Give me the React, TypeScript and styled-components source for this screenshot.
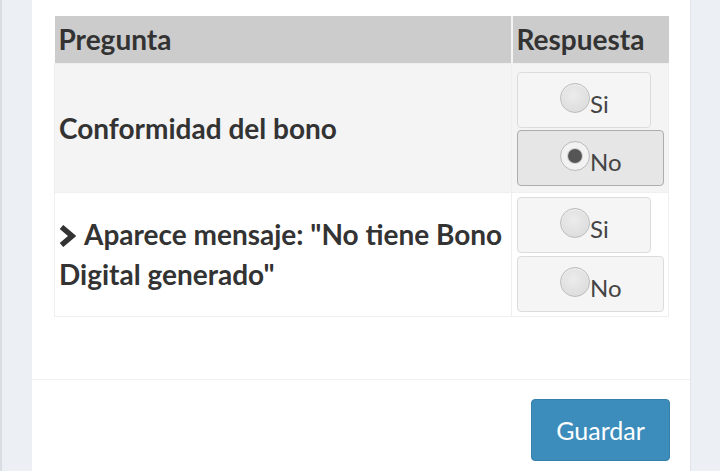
import React from 'react';
import styled, { createGlobalStyle } from 'styled-components';

const GlobalStyle = createGlobalStyle`
  html, body {
    margin: 0;
    padding: 0;
    background: #ecf0f5;
  }
  body {
    font-family: Lato, 'Open Sans', sans-serif;
    color: #333;
  }
`;

const Wrapper = styled.div`
  display: flex;
  min-height: 471px;
  border-left: 2px solid #d9dde4;
  padding: 0 29px 0 30px;
`;

const Box = styled.div`
  flex: 1;
  background: #fff;
  border-right: 1px solid #dfe3ea;
  display: flex;
  flex-direction: column;
`;

const BoxBody = styled.div`
  padding: 16px 21px 62px 22px;
`;

const BoxFooter = styled.div`
  border-top: 1px solid #f1f1f1;
  padding: 19px 20px 9px;
  display: flex;
  justify-content: flex-end;
`;

const Table = styled.table`
  width: 100%;
  table-layout: fixed;
  border-collapse: collapse;
`;

const Th = styled.th<{ $w?: number }>`
  background: #cccccc;
  text-align: left;
  font-size: 28px;
  font-weight: 700;
  color: #333;
  height: 47px;
  padding: 0 4px;
  border-left: 2px solid #f4f4f4;
  box-sizing: border-box;
  width: ${(p) => (p.$w ? `${p.$w}px` : 'auto')};
  &:first-child {
    border-left: none;
  }
`;

const Tr = styled.tr<{ $striped?: boolean }>`
  background: ${(p) => (p.$striped ? '#f4f4f4' : '#fff')};
  border: 1px solid #efefef;
`;

const QuestionCell = styled.td`
  font-size: 28px;
  font-weight: 700;
  line-height: 40px;
  color: #333;
  padding: 0 4px;
  vertical-align: middle;
  border-right: 1px solid #efefef;
`;

const AnswerCell = styled.td<{ $top: number; $bottom: number }>`
  padding: ${(p) => p.$top}px 5px ${(p) => p.$bottom}px;
  vertical-align: top;
`;

const Options = styled.div<{ $gap: number }>`
  display: flex;
  flex-direction: column;
  align-items: flex-start;
  gap: ${(p) => p.$gap}px;
`;

const OptionLabel = styled.label<{ $active?: boolean }>`
  display: flex;
  align-items: baseline;
  padding: 10px 41px 8px 42px;
  border-radius: 4px;
  border: 1px solid ${(p) => (p.$active ? '#adadad' : '#dcdcdc')};
  background: ${(p) => (p.$active ? '#e6e6e6' : '#f5f5f5')};
  font-size: 24px;
  line-height: 30px;
  color: #444;
  cursor: pointer;
`;

const RadioCircle = styled.span<{ $checked?: boolean }>`
  display: inline-block;
  width: 30px;
  height: 30px;
  box-sizing: border-box;
  border-radius: 50%;
  border: 1px solid #bdbdbd;
  background: radial-gradient(circle at 45% 40%, #ececec 0%, #dedede 70%, #d2d2d2 100%);
  box-shadow: ${(p) =>
    p.$checked
      ? 'inset 0 0 0 6px #f2f2f2, inset 0 0 0 7px #cfcfcf'
      : 'inset 0 1px 2px rgba(255,255,255,0.6)'};
  position: relative;
  &::after {
    content: '';
    display: ${(p) => (p.$checked ? 'block' : 'none')};
    position: absolute;
    left: 50%;
    top: 50%;
    width: 14px;
    height: 14px;
    margin: -7px 0 0 -7px;
    border-radius: 50%;
    background: #555;
  }
`;

const Chevron = styled.svg`
  width: 17px;
  height: 22px;
  margin-right: 8px;
  vertical-align: -2px;
`;

const SaveButton = styled.button`
  font-family: Lato, 'Open Sans', sans-serif;
  font-size: 25px;
  color: #fff;
  background: #3c8dbc;
  border: 1px solid #367fa9;
  border-radius: 4px;
  width: 139px;
  height: 62px;
  cursor: pointer;
`;

type Question = {
  text: React.ReactNode;
  answer: 'Si' | 'No' | null;
  top: number;
  bottom: number;
  gap: number;
};

const questions: Question[] = [
  { text: 'Conformidad del bono', answer: 'No', top: 8, bottom: 6, gap: 2 },
  {
    text: (
      <>
        <Chevron viewBox="0 0 17 22">
          <polyline
            points="2.5,2 13,11 2.5,20"
            fill="none"
            stroke="#333"
            strokeWidth="5.4"
            strokeLinejoin="miter"
          />
        </Chevron>
        Aparece mensaje: "No tiene Bono
        <br />
        Digital generado"
      </>
    ),
    answer: null,
    top: 4,
    bottom: 4,
    gap: 3,
  },
];

const App = () => {
  return (
    <Wrapper>
      <GlobalStyle />
      <Box>
        <BoxBody>
          <Table>
            <thead>
              <tr>
                <Th>Pregunta</Th>
                <Th $w={157}>Respuesta</Th>
              </tr>
            </thead>
            <tbody>
              {questions.map((q, i) => (
                <Tr key={i} $striped={i % 2 === 0}>
                  <QuestionCell>{q.text}</QuestionCell>
                  <AnswerCell $top={q.top} $bottom={q.bottom}>
                    <Options $gap={q.gap}>
                      {(['Si', 'No'] as const).map((opt) => (
                        <OptionLabel key={opt} $active={q.answer === opt}>
                          <RadioCircle $checked={q.answer === opt} />
                          {opt}
                        </OptionLabel>
                      ))}
                    </Options>
                  </AnswerCell>
                </Tr>
              ))}
            </tbody>
          </Table>
        </BoxBody>
        <BoxFooter>
          <SaveButton type="button">Guardar</SaveButton>
        </BoxFooter>
      </Box>
    </Wrapper>
  );
};

export default App;
